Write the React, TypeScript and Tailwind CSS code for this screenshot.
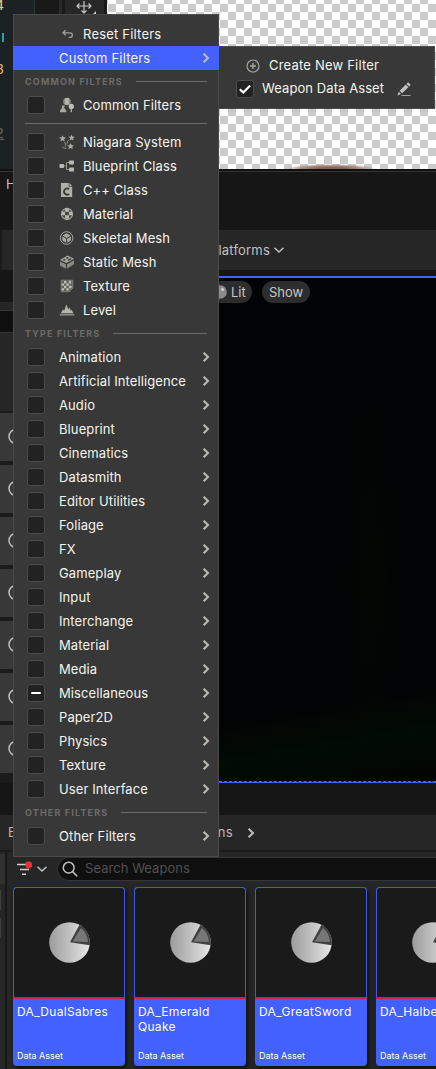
import React from "react";

type IconName =
  | "common"
  | "niagara"
  | "blueprint"
  | "cpp"
  | "material"
  | "skeletal"
  | "static"
  | "texture"
  | "level";

const iconShapes: Record<IconName, React.ReactNode> = {
  common: (
    <>
      <circle cx="8" cy="4.5" r="3.8" fill="#8f8f8b" />
      <path d="M6.2 1.2h3.6v6.4H6.2z" fill="#b5b5b0" />
      <path d="M2.6 8.6h3.2l-.6 2.2L7.2 13.6v1.6H1v-1.6l2.2-2.8z" />
      <circle cx="12.3" cy="9.4" r="2.6" fill="#c0c0bb" />
      <path d="M11.6 11.5h1.4v3.7h-1.4z" />
    </>
  ),
  niagara: (
    <>
      <path d="M3.6 1.2l1 2.1 2.3.3-1.7 1.6.5 2.3-2.1-1.2-2.1 1.2.5-2.3L.3 3.6l2.3-.3z" />
      <path d="M12.6.6l.9 2 2.2.2-1.6 1.5.4 2.2-1.9-1.1-1.9 1.1.4-2.2-1.6-1.5 2.2-.2z" />
      <path d="M11.6 9l1 2.1 2.3.3-1.7 1.6.5 2.3-2.1-1.2-2.1 1.2.5-2.3-1.7-1.6 2.3-.3z" />
      <path d="M9.8 6C8 7 8 9 8 10.5M5.5 8c1 1.5 1.2 3 1 4.5M2.8 12.8c1 1.2 3 1.6 4.7 1.4" fill="none" stroke="#90908b" strokeWidth="1" />
    </>
  ),
  blueprint: (
    <>
      <rect x=".5" y="6" width="4.5" height="4" rx=".8" fill="#b8b8b3" />
      <rect x="10" y="2.6" width="5" height="4" rx=".8" fill="#b8b8b3" />
      <rect x="10" y="9.6" width="5" height="4" rx=".8" fill="#b8b8b3" />
      <path d="M5 8h2.5M10 4.5H7.5v7H10" fill="none" stroke="#96968f" strokeWidth="1" />
    </>
  ),
  cpp: (
    <>
      <path d="M2 1h7.7v3.8h3.5V15H2z" fill="#b0b0ab" />
      <path d="M10.4 1l2.8 2.9h-2.8z" fill="#b0b0ab" />
      <path d="M10.1 7.4A3 3 0 1 0 10.1 11.8" fill="none" stroke="#383838" strokeWidth="1.7" />
    </>
  ),
  material: (
    <>
      <circle cx="8" cy="8" r="5.6" fill="#4b4b49" stroke="#a5a5a0" strokeWidth="1.1" />
      <path d="M6 2.7h4v3H6zM3 5.7h3v3.6H3zM10 5.7h3v3.6h-3zM6 9.3h4v3.4H6z" fill="#b5b5b0" />
    </>
  ),
  skeletal: (
    <>
      <circle cx="7.6" cy="8" r="6.3" fill="none" stroke="#a5a5a0" strokeWidth="1" />
      <path d="M7.6 3.3l4.1 2.3-4.1 2.3-4.1-2.3zM3.3 6.6l3.8 2.1v4.1l-3.8-2.2zM11.9 6.6L8.1 8.7v4.1l3.8-2.2z" />
    </>
  ),
  static: (
    <>
      <path d="M1 7.5l6 2.8v4.5l-6-3zM8 10.3l7-4v4l-7 4.5z" fill="#898984" />
      <path d="M8.5 1.5L15 4.8 7.5 9 1 6z" fill="#a5a5a0" />
      <path d="M8.3 3l1.7.9-1.7.9-1.7-.9zM5.2 5l1.7.9-1.7.9-1.7-.8zM11.3 4.2l1.4.8-3 1.7-1.5-.8z" fill="#383838" />
    </>
  ),
  texture: (
    <>
      <path d="M2.2 2.2h11.6v8L10 13.8H2.2z" fill="#60605d" stroke="#8c8c87" strokeWidth=".8" />
      <path d="M5 3h2.4v2.4H5zM9.8 3h2.4v2.4H9.8zM2.8 5.4H5v2.4H2.8zM7.4 5.4h2.4v2.4H7.4zM5 7.8h2.4v2.4H5zM9.8 7.8h2.8v2.4H9.8zM2.8 10.2H5v2.4H2.8zM7.4 10.2h2.4v2.4H7.4z" fill="#bcbcb7" />
    </>
  ),
  level: (
    <>
      <path d="M1.8 11.2L4 7.5l1.3 1L7.4 2.5l2 5 1.3-2 1.1 3.3 1-.8 1.6 3.2z" fill="#b5b5b0" />
      <path d="M.8 11.8h14.4v1.8H.8z" fill="#868681" />
    </>
  ),
};

function Glyph({ name }: { name: IconName }) {
  return (
    <svg viewBox="0 0 16 16" className="size-4 shrink-0" fill="#a8a8a3">
      {iconShapes[name]}
    </svg>
  );
}

function Chevron() {
  return (
    <svg viewBox="0 0 8 12" className="h-3 w-2 shrink-0" fill="none" stroke="#bdbdb8" strokeWidth="2">
      <path d="M1.6 1.7L6 6 1.6 10.3" />
    </svg>
  );
}

function DownChevron() {
  return (
    <svg viewBox="0 0 12 8" className="h-2 w-3 shrink-0" fill="none" stroke="#c0c0c0" strokeWidth="1.5">
      <path d="M1.5 1.7L6 6l4.5-4.3" />
    </svg>
  );
}

function Box({ state }: { state?: "on" | "mixed" }) {
  return (
    <span className="flex size-[18px] shrink-0 items-center justify-center rounded-[3px] border border-[#4c4c4c] bg-[#222222]">
      {state === "mixed" && <span className="h-0.5 w-[10px] rounded-sm bg-white" />}
      {state === "on" && (
        <svg viewBox="0 0 16 16" className="size-4" fill="none" stroke="#ffffff" strokeWidth="2.2">
          <path d="M2.8 8.2l3.5 3.3 6.9-7" />
        </svg>
      )}
    </span>
  );
}

function Header({ children }: { children: string }) {
  return (
    <div className="flex h-[23px] items-center gap-[13px] pr-[11px] pl-[11px]">
      <span className="text-[9px] font-bold tracking-[1.16px] whitespace-nowrap text-[#6c6c6a]">{children}</span>
      <span className="h-px flex-1 bg-[#6a6a68]" />
    </div>
  );
}

function AssetRow({ icon, label }: { icon: IconName; label: string }) {
  return (
    <div className="flex h-6 items-center pl-[13px]">
      <Box />
      <span className="ml-[14px] flex">
        <Glyph name={icon} />
      </span>
      <span className="ml-2 pt-0.5">{label}</span>
    </div>
  );
}

function TypeRow({ label, state }: { label: string; state?: "mixed" }) {
  return (
    <div className="flex h-6 items-center pr-2 pl-[13px]">
      <Box state={state} />
      <span className="ml-[14px] flex-1 pt-0.5 whitespace-nowrap">{label}</span>
      <Chevron />
    </div>
  );
}

const assets: { icon: IconName; label: string }[] = [
  { icon: "niagara", label: "Niagara System" },
  { icon: "blueprint", label: "Blueprint Class" },
  { icon: "cpp", label: "C++ Class" },
  { icon: "material", label: "Material" },
  { icon: "skeletal", label: "Skeletal Mesh" },
  { icon: "static", label: "Static Mesh" },
  { icon: "texture", label: "Texture" },
  { icon: "level", label: "Level" },
];

const types = [
  "Animation",
  "Artificial Intelligence",
  "Audio",
  "Blueprint",
  "Cinematics",
  "Datasmith",
  "Editor Utilities",
  "Foliage",
  "FX",
  "Gameplay",
  "Input",
  "Interchange",
  "Material",
  "Media",
  "Miscellaneous",
  "Paper2D",
  "Physics",
  "Texture",
  "User Interface",
];

function FilterMenu() {
  return (
    <div className="absolute top-[14px] left-[13px] h-[843px] w-[206px] border border-[#4a4a4a] bg-[#383838] py-[7px] text-[13px] tracking-[0.1px] text-[#f4f4ee]">
      <div className="flex h-6 items-center pl-[46px]">
        <svg viewBox="0 0 16 16" className="size-4" fill="none" stroke="#a0a09b" strokeWidth="1.3">
          <path d="M5.6 4.2L3 6.8l2.6 2.6M3.2 6.8h6.9c3 0 3 4.6 0 4.6H8.7" />
        </svg>
        <span className="ml-[7px] pt-0.5 tracking-[0.2px]">Reset Filters</span>
      </div>
      <div className="-mx-px flex h-6 items-center justify-between bg-[#4361ff] pr-[9px] pl-[46px]">
        <span className="pt-0.5 tracking-[0.2px]">Custom Filters</span>
        <Chevron />
      </div>
      <Header>COMMON FILTERS</Header>
      <AssetRow icon="common" label="Common Filters" />
      <div className="flex h-[13px] items-center px-[11px]">
        <span className="h-px flex-1 bg-[#6a6a68]" />
      </div>
      {assets.map((a) => (
        <AssetRow key={a.label} icon={a.icon} label={a.label} />
      ))}
      <Header>TYPE FILTERS</Header>
      {types.map((t) => (
        <TypeRow key={t} label={t} state={t === "Miscellaneous" ? "mixed" : undefined} />
      ))}
      <Header>OTHER FILTERS</Header>
      <TypeRow label="Other Filters" />
    </div>
  );
}

function CustomMenu() {
  return (
    <div className="absolute top-[46px] left-[219px] h-[63px] w-[216px] border border-l-0 border-[#4a4a4a] bg-[#383838] py-[7px] text-[13px] text-[#f4f4ee]">
      <div className="flex h-[23px] items-center pl-[26px]">
        <svg viewBox="0 0 16 16" className="size-4" fill="none" stroke="#a3a39f" strokeWidth="1.2">
          <circle cx="8" cy="8" r="6" />
          <path d="M8 5v6M5 8h6" strokeWidth="1.5" />
        </svg>
        <span className="ml-2 tracking-[0.2px]">Create New Filter</span>
      </div>
      <div className="flex h-6 items-center pl-[17px]">
        <Box state="on" />
        <span className="ml-2 w-[134px] tracking-[0.08px] whitespace-nowrap">Weapon Data Asset</span>
        <svg viewBox="0 0 16 16" className="size-4" fill="#c0c0c0">
          <path d="M12.1 1.3l2.6 2.5-1.6 1.7-2.6-2.6zM9.8 3.6l2.6 2.6-6.2 6.1-2.6-2.5zM2.8 10.7l2.3 2.4-3.8 1.3z" />
          <path d="M5.5 14h9v.8h-9z" />
        </svg>
      </div>
    </div>
  );
}

function AssetCard({ id, label }: { id: number; label: React.ReactNode }) {
  return (
    <div className="flex h-[179px] w-28 shrink-0 flex-col overflow-hidden rounded-[4px] bg-[#4361ff] shadow-[2px_3px_4px_#111111]">
      <div className="flex h-[110px] items-start rounded-t-[4px] border border-b-0 border-[#3f5ae0] bg-[#1a1a1a] pt-[34px] pl-[35px]">
        <svg viewBox="0 0 42 42" className="size-[41px]">
          <defs>
            <linearGradient id={`disc${id}`}>
              <stop offset="0" stopColor="#9c9c9c" />
              <stop offset="1" stopColor="#e6e6e6" />
            </linearGradient>
          </defs>
          <circle cx="21" cy="21" r="20.8" fill={`url(#disc${id})`} />
          <path d="M21.5 20.8L31.3 2.9A20.8 20.8 0 0 1 41.7 23.8z" fill="#414141" />
          <path d="M24.2 19.9L32.7 6.2A18.5 18.5 0 0 1 39.8 20.4z" fill="#777777" />
        </svg>
      </div>
      <div className="h-0.5 shrink-0 bg-[#d01b55]" />
      <div className="flex flex-1 flex-col justify-between px-1 pt-[5px] pb-[4px] text-white">
        <span className="text-[12px] leading-[15px] tracking-[0.3px]">{label}</span>
        <span className="text-[9px] leading-3">Data Asset</span>
      </div>
    </div>
  );
}

function TopArea() {
  return (
    <div className="flex h-[169px] shrink-0">
      <div className="flex w-[35px] flex-col border-r border-[#303535] bg-[#1c2223] font-['Liberation_Mono'] text-[15px] leading-none">
        <div className="-mt-px flex h-[22px] w-1 items-start justify-end text-[#e5cf72]">4</div>
        <div className="mt-3 flex h-[21px] w-1 justify-end">
          <span className="h-[9px] w-0.5 bg-[#28a5a0]" />
        </div>
        <div className="mt-[9px] flex h-[64px] w-1 justify-end text-[#e5b878]">8</div>
        <div className="flex w-1 justify-end text-[#656a68] underline">2</div>
      </div>
      <div className="w-[27px] border-r-[3px] border-[#292929] bg-[#191919]" />
      <div className="w-[45px] border-x-[3px] border-[#191919] bg-[#272727] pt-px">
        <svg viewBox="0 0 24 14" className="ml-[7px] h-[14px] w-6" fill="none" stroke="#c8c8c8" strokeWidth="1.2">
          <path d="M12-2v14M5 5h14M7.5 2.5L5 5l2.5 2.5M16.5 2.5L19 5l-2.5 2.5M9.5 9.5L12 12l2.5-2.5" />
          <path d="M24 10v3h-3z" fill="#c8c8c8" stroke="none" />
        </svg>
      </div>
      <div className="flex flex-1 items-end bg-[conic-gradient(#cbcbcb_25%,#ffffff_0_50%,#cbcbcb_0_75%,#ffffff_0)] bg-[length:16px_16px] bg-[position:1px_-4px]">
        <span className="ml-[178px] h-[5px] w-[92px] bg-[radial-gradient(50%_100%_at_50%_100%,#8b6658_30%,#a78e84_65%,transparent)]" />
      </div>
    </div>
  );
}

function SidePanel() {
  return (
    <div className="flex h-[513px] w-[219px] shrink-0 flex-col bg-[#1b1b1b]">
      <div className="h-8 bg-[#161616]" />
      <div className="h-2 bg-[#262626]" />
      <div className="h-[23px] border-y border-[#353535] bg-[#0f0f0f]" />
      <div className="h-[78px] bg-[#262626]" />
      <div className="mt-0.5 flex flex-col gap-1">
        {[0, 1, 2, 3, 4, 5, 6].map((n) => (
          <div key={n} className="flex h-12 items-center bg-[#383838] pl-2">
            <svg viewBox="0 0 16 16" className="size-4" fill="none" stroke="#c0c0c0" strokeWidth="1.5">
              <circle cx="8" cy="7.5" r="7" />
            </svg>
          </div>
        ))}
      </div>
    </div>
  );
}

function Viewport() {
  return (
    <div className="flex flex-1 flex-col bg-[#161616] pt-1.5">
      <div className="h-0.5 bg-[#4361ff]" />
      <div className="flex h-[503px] items-start gap-[10px] bg-[#020304] bg-[linear-gradient(170deg,transparent_82%,#020b04_90%,#010401),radial-gradient(30px_200px_at_150px_300px,#010703,transparent)] pt-[3px] text-[13px] text-[#c6c6c6]">
        <div className="flex h-[22px] w-[33px] items-center rounded-r-full bg-[#2d2d2d]">
          <svg viewBox="0 0 8 16" className="h-4 w-2">
            <circle cx="1" cy="8" r="6.8" fill="#8b8b8b" />
            <circle cx="3.5" cy="5.5" r="1.5" fill="#d0d0d0" />
          </svg>
          <span className="ml-1 pt-0.5">Lit</span>
        </div>
        <div className="flex h-[22px] w-12 items-center justify-center rounded-full bg-[#2d2d2d] pt-0.5">Show</div>
      </div>
      <div className="border-t border-dashed border-[#4361ff]" />
      <div className="h-px bg-[#4361ff]" />
    </div>
  );
}

export default function App() {
  return (
    <div className="relative flex h-[1069px] w-[436px] flex-col overflow-hidden bg-[#262626] font-['Inter',sans-serif]">
      <TopArea />
      <div className="h-[3px] shrink-0 border-b border-[#363636] bg-[#101010]" />
      <div className="h-[58px] shrink-0 bg-[#161616] pt-[3px] pl-1.5 text-[13px] text-[#c0c0c0]">Ha</div>
      <div className="flex h-10 shrink-0 items-center border-l-2 border-[#1b1b1b] bg-[#262626] text-[13px] text-[#c0c0c0]">
        <span className="flex w-[268px] justify-end pt-0.5 tracking-[0.2px]">Platforms</span>
        <span className="ml-[3px] flex">
          <DownChevron />
        </span>
      </div>
      <div className="flex shrink-0">
        <SidePanel />
        <Viewport />
      </div>
      <div className="h-8 shrink-0 bg-[#161616]" />
      <div className="flex h-[35px] shrink-0 items-center pl-2 text-[13px] text-[#b8b8b8]">
        <span>E</span>
        <span className="flex flex-1 items-center gap-[14px] pl-[151px]">
          <span className="w-[66px] text-right tracking-[0.3px]">Weapons</span>
          <Chevron />
        </span>
      </div>
      <div className="h-0.5 shrink-0 bg-[#1b1b1b]" />
      <div className="flex flex-1">
        <div className="flex w-[7px] shrink-0 flex-col border-r-2 border-[#181818] pt-0.5">
          <span className="h-[30px] bg-[#303030]" />
          <span className="mt-1.5 h-5 w-px bg-[#404040]" />
          <span className="mt-2 h-5 w-px bg-[#404040]" />
        </div>
        <div className="flex min-w-0 flex-1 flex-col pt-[5px]">
          <div className="flex h-[24px] items-center pl-[9px]">
            <svg viewBox="0 0 18 16" className="h-4 w-[18px]" fill="none" stroke="#d0d0d0" strokeWidth="1.5">
              <path d="M1 3.5h12M4 8.5h9M6 13.2h4" />
              <circle cx="12.7" cy="4" r="3.4" fill="#f13030" stroke="none" />
            </svg>
            <span className="ml-[2px] flex">
              <DownChevron />
            </span>
            <div className="ml-[9px] flex h-6 flex-1 items-center rounded-l-full border border-r-0 border-[#353535] bg-[#0f0f0f] pl-1">
              <svg viewBox="0 0 16 16" className="size-4" fill="none" stroke="#c0c0c0" strokeWidth="1.5">
                <circle cx="6.7" cy="6.7" r="5.4" />
                <path d="M10.6 10.6l4.6 4.6" />
              </svg>
              <span className="ml-[7px] text-[13px] tracking-[0.05px] text-[#505050]">Search Weapons</span>
            </div>
          </div>
          <div className="mt-1.5 flex gap-[9px] pl-1.5">
            <AssetCard id={1} label="DA_DualSabres" />
            <AssetCard id={2} label={<>DA_Emerald<br />Quake</>} />
            <AssetCard id={3} label="DA_GreatSword" />
            <AssetCard id={4} label="DA_Halberd" />
          </div>
        </div>
      </div>
      <FilterMenu />
      <CustomMenu />
    </div>
  );
}
